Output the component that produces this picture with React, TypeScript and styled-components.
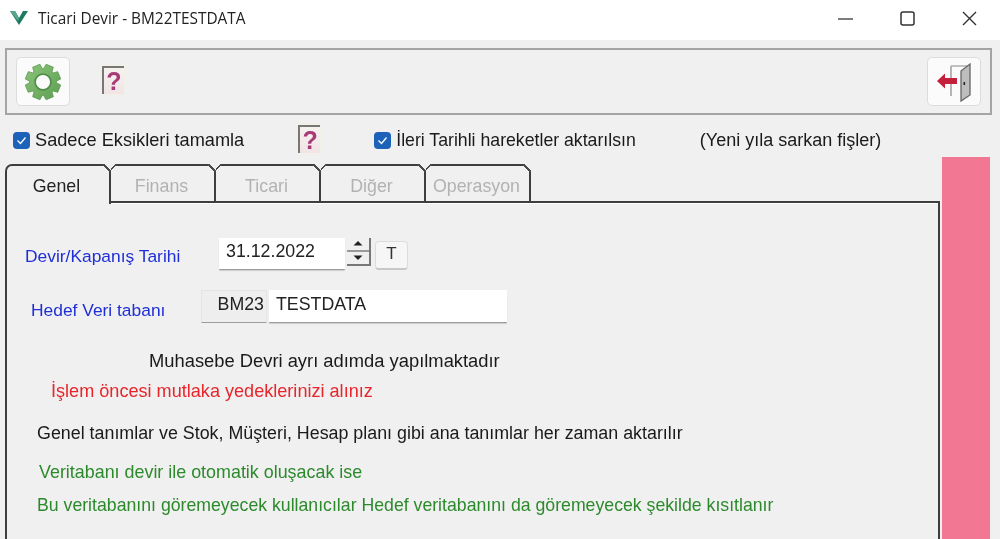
import React from "react";
import styled, { createGlobalStyle } from "styled-components";

const Global = createGlobalStyle`
  html, body { margin: 0; padding: 0; background: #f0f0f0; }
  body { font-family: "Liberation Sans", Arial, sans-serif; }
  * { box-sizing: border-box; }
`;
const Page = styled.div`
  width: 1000px; height: 539px; overflow: hidden; background: #f0f0f0; color: #1a1a1a;
  display: flex; flex-direction: column; filter: blur(0.4px);
`;
const TitleBar = styled.header`
  height: 40px; flex: none; background: #fff; display: flex; align-items: center; padding: 0 0 4px 9px;
`;
const TitleText = styled.span`
  font-family: "Open Sans", sans-serif; font-size: 15.4px; margin-left: 9px; color: #222; flex: 1; white-space: nowrap;
`;
const WinButtons = styled.div`
  display: flex; align-items: center; gap: 47px; padding-right: 23px; color: #333;
`;
const Toolbar = styled.div`
  margin: 8px 8px 0 5px; height: 67px; flex: none; border: 2px solid #a4a4a4; display: flex;
  align-items: center; padding: 0 9px 0 9px;
`;
const ToolButton = styled.button`
  width: 54px; height: 49px; padding: 0; background: #fbfbfb; border: 1px solid #dcdcdc; border-radius: 5px;
  display: flex; align-items: center; justify-content: center;
`;
const Help = styled.span<{ $ml: number; $mt: number }>`
  width: 22px; height: 28px; margin: ${p => p.$mt}px 0 0 ${p => p.$ml}px; flex: none;
  background: linear-gradient(#f5f2ee, #f1e4e6);
  border-top: 2px solid #777; border-left: 2px solid #777; box-shadow: 0 0 3px #f6eeda;
  display: flex; align-items: center; justify-content: center; padding-top: 1px;
  color: #a83a78; font-weight: 700; font-size: 25px; line-height: 1;
`;
const Spacer = styled.div` flex: 1; `;
const OptionRow = styled.div`
  height: 28px; margin-top: 11px; flex: none; display: flex; align-items: center; padding-left: 13px;
`;
const Check = styled.span<{ $ml?: number }>`
  width: 17px; height: 17px; flex: none; border-radius: 4px; background: #1b62b8; margin-left: ${p => p.$ml ?? 0}px;
  display: flex; align-items: center; justify-content: center;
`;
const OptionLabel = styled.span<{ $ml: number; $size: number }>`
  margin-left: ${p => p.$ml}px; font-size: ${p => p.$size}px; white-space: nowrap;
`;
const Main = styled.div`
  flex: 1; min-height: 0; display: flex; margin-top: 4px; padding-left: 5px;
`;
const TabColumn = styled.div`
  width: 935px; flex: none; display: flex; flex-direction: column; padding-top: 6px;
`;
const PinkBar = styled.aside`
  width: 48px; margin: -1px 0 0 2px; background: #f27792; flex: none;
`;
const TabRow = styled.div` display: flex; height: 39px; flex: none; position: relative; z-index: 1; `;
const Tab = styled.div<{ $active?: boolean }>`
  position: relative; width: ${p => (p.$active ? 106 : 105)}px; display: flex; align-items: center; justify-content: center;
  padding: ${p => (p.$active ? "3px 3px 0 0" : "6px 2px 0 0")}; font-size: 17.8px;
  color: ${p => (p.$active ? "#222" : "#b2b2b2")};
  border-top: 2px solid #3e3e3e; border-right: 2px solid #3e3e3e;
  border-left: ${p => (p.$active ? "2px solid #3e3e3e" : "0")};
  border-bottom: ${p => (p.$active ? "0" : "2px solid #3e3e3e")};
  border-top-left-radius: ${p => (p.$active ? 7 : 0)}px;
  height: ${p => (p.$active ? 40 : 39)}px;
  background: #f0f0f0;
  &::after {
    content: ""; position: absolute; top: -2px; right: -2px; width: 8px; height: 8px;
    background: linear-gradient(45deg, transparent 42%, #4a4a4a 42%, #4a4a4a 62%, #f0f0f0 62%);
  }
  &::before {
    content: ${p => (p.$active ? "none" : '""')}; position: absolute; top: -2px; left: 0; width: 6px; height: 6px;
    background: linear-gradient(-45deg, transparent 42%, #4a4a4a 42%, #4a4a4a 62%, #f0f0f0 62%);
  }
`;
const Panel = styled.section`
  flex: 1; margin-top: -2px; background: #f0f0f0; border: 2px solid #3e3e3e; border-bottom: 0; padding-top: 35px;
  box-shadow: inset 0 1px 0 #fff;
`;
const FieldRow = styled.div<{ $h: number; $mt?: number }>`
  display: flex; align-items: center; height: ${p => p.$h}px; margin-top: ${p => p.$mt ?? 0}px; font-size: 17.8px;
`;
const FieldLabel = styled.span<{ $ml: number; $w: number; $pt: number }>`
  color: #1f2fd6; margin-left: ${p => p.$ml}px; width: ${p => p.$w}px; flex: none; white-space: nowrap;
  font-size: 17.4px; padding-top: ${p => p.$pt}px;
`;
const Input = styled.div<{ $w: number }>`
  width: ${p => p.$w}px; height: 100%; background: #fff; border-bottom: 1px solid #9c9c9c;
  box-shadow: 0 1px 1px #ccc; padding: 0 0 4px 7px; display: flex; align-items: center; color: #222; border-radius: 1px;
`;
const Prefix = styled.div`
  width: 66px; height: 100%; background: #eeeeee; border: 1px solid #e4e4e4; border-bottom: 1px solid #9c9c9c;
  margin-right: 2px; display: flex; align-items: center; justify-content: flex-end; padding: 0 2px 5px 0; color: #222;
`;
const Spinner = styled.div`
  width: 24px; height: 28px; margin: -5px 0 0 2px; display: flex; flex-direction: column;
  border-right: 2px solid #777; position: relative; flex: none;
`;
const SpinPart = styled.div<{ $bottom?: boolean }>`
  flex: 1; display: flex; align-items: center; justify-content: center;
  background: #f0f0f0; border-bottom: ${p => (p.$bottom ? "2px solid #777" : "2px solid #999")};
`;
const TButton = styled.button`
  width: 33px; height: 29px; margin: 3px 0 0 4px; background: #f6f6f6; border: 1px solid #dcdcdc; border-bottom: 2px solid #c8c8c8; border-radius: 4px;
  font: 400 17px "Liberation Sans", sans-serif; color: #333; padding: 0 0 2px; flex: none;
`;
const Line = styled.div<{ $ml: number; $mt: number; $color: string; $size: number }>`
  margin-left: ${p => p.$ml}px; margin-top: ${p => p.$mt}px; color: ${p => p.$color};
  font-size: ${p => p.$size}px; line-height: 20px; white-space: nowrap;
`;

const Logo = () => (
  <svg width="20" height="16" viewBox="0 0 20 16">
    <path d="M1 1h5l4 7 4-7h5l-9 14z" fill="#1c7a63" />
    <path d="M1 1h5l4 7-1 3z" fill="#5aa58f" />
  </svg>
);

const gearPath = (() => {
  const n = 8, c = 20, ro = 18, ri = 13.5;
  let d = "";
  for (let i = 0; i < n; i++) {
    const a = (i * 2 * Math.PI) / n + Math.PI / 8;
    const pts: [number, number][] = [[ri, a - 0.34], [ro, a - 0.22], [ro, a + 0.22], [ri, a + 0.34]];
    pts.forEach(([r, t], k) => {
      d += `${i === 0 && k === 0 ? "M" : "L"}${(c + r * Math.cos(t)).toFixed(2)} ${(c + r * Math.sin(t)).toFixed(2)}`;
    });
  }
  return d + "Z M20 12.5a7.5 7.5 0 1 0 0 15a7.5 7.5 0 0 0 0-15Z";
})();
const Gear = () => (
  <svg width="40" height="40" viewBox="0 0 40 40">
    <defs>
      <linearGradient id="gearFill" x1="0" y1="0" x2="1" y2="1">
        <stop offset="0" stopColor="#8cc47a" />
        <stop offset="1" stopColor="#5d9f52" />
      </linearGradient>
    </defs>
    <path fillRule="evenodd" d={gearPath} fill="url(#gearFill)" stroke="#5b9750" strokeWidth="0.8" strokeLinejoin="round" />
    <circle cx="20" cy="20" r="8" fill="none" stroke="#4f8c47" strokeWidth="1.4" />
  </svg>
);
const Door = () => (
  <svg width="40" height="42" viewBox="0 0 40 42">
    <path d="M17 5h17" stroke="#9a9a9a" strokeWidth="1.2" />
    <path d="M17 5v30" stroke="#b5b5b5" strokeWidth="2" />
    <path d="M27 10l9-7v31l-9 6z" fill="#bdbdbd" stroke="#666" strokeWidth="1.3" />
    <rect x="29.5" y="21" width="1.6" height="3" fill="#222" />
    <path d="M3 20l8-7.5v4.5h12v6H11v4.5z" fill="#c4203c" />
  </svg>
);
const Arrow = ({ up }: { up?: boolean }) => (
  <svg width="12" height="7" viewBox="0 0 12 7">
    <path d={up ? "M6 1l4.5 4.5h-9z" : "M1.5 1.5h9L6 6z"} fill="#222" />
  </svg>
);
const Tick = () => (
  <svg width="11" height="9" viewBox="0 0 11 9"><path d="M1.5 4.5l3 3 5-6" fill="none" stroke="#fff" strokeWidth="1.3" /></svg>
);

export default function App() {
  return (
    <Page>
      <Global />
      <TitleBar>
        <Logo />
        <TitleText>Ticari Devir - BM22TESTDATA</TitleText>
        <WinButtons>
          <svg width="15" height="15" viewBox="0 0 15 15"><path d="M0 8h15" stroke="#444" strokeWidth="1.4" /></svg>
          <svg width="15" height="15" viewBox="0 0 15 15"><rect x="1" y="1" width="13" height="13" rx="2" fill="none" stroke="#333" strokeWidth="1.5" /></svg>
          <svg width="15" height="15" viewBox="0 0 15 15"><path d="M1 1l13 13M14 1L1 14" stroke="#333" strokeWidth="1.4" /></svg>
        </WinButtons>
      </TitleBar>
      <Toolbar>
        <ToolButton aria-label="Ayarlar"><Gear /></ToolButton>
        <Help $ml={32} $mt={-4}>?</Help>
        <Spacer />
        <ToolButton aria-label="Çıkış"><Door /></ToolButton>
      </Toolbar>
      <OptionRow>
        <Check><Tick /></Check>
        <OptionLabel $ml={5} $size={18.2}>Sadece Eksikleri tamamla</OptionLabel>
        <Help $ml={54} $mt={-2}>?</Help>
        <Check $ml={54}><Tick /></Check>
        <OptionLabel $ml={5} $size={17.7}>İleri Tarihli hareketler aktarılsın</OptionLabel>
        <OptionLabel $ml={64} $size={18}>(Yeni yıla sarkan fişler)</OptionLabel>
      </OptionRow>
      <Main>
        <TabColumn>
          <TabRow>
            <Tab $active>Genel</Tab>
            <Tab>Finans</Tab>
            <Tab>Ticari</Tab>
            <Tab>Diğer</Tab>
            <Tab>Operasyon</Tab>
          </TabRow>
          <Panel>
            <FieldRow $h={32}>
              <FieldLabel $ml={18} $w={194} $pt={5}>Devir/Kapanış Tarihi</FieldLabel>
              <Input $w={126}>31.12.2022</Input>
              <Spinner>
                <SpinPart><Arrow up /></SpinPart>
                <SpinPart $bottom><Arrow /></SpinPart>
              </Spinner>
              <TButton>T</TButton>
            </FieldRow>
            <FieldRow $h={33} $mt={20}>
              <FieldLabel $ml={24} $w={170} $pt={7}>Hedef Veri tabanı</FieldLabel>
              <Prefix>BM23</Prefix>
              <Input $w={238}>TESTDATA</Input>
            </FieldRow>
            <Line $ml={142} $mt={28} $color="#1a1a1a" $size={18.35}>Muhasebe Devri ayrı adımda yapılmaktadır</Line>
            <Line $ml={44} $mt={10} $color="#e8252b" $size={18.1}>İşlem öncesi mutlaka yedeklerinizi alınız</Line>
            <Line $ml={30} $mt={22} $color="#1a1a1a" $size={17.85}>Genel tanımlar ve Stok, Müşteri, Hesap planı gibi ana tanımlar her zaman aktarılır</Line>
            <Line $ml={32} $mt={19} $color="#2c8a2c" $size={17.9}>Veritabanı devir ile otomatik oluşacak ise</Line>
            <Line $ml={30} $mt={13} $color="#2c8a2c" $size={17.7}>Bu veritabanını göremeyecek kullanıcılar Hedef veritabanını da göremeyecek şekilde kısıtlanır</Line>
          </Panel>
        </TabColumn>
        <PinkBar />
      </Main>
    </Page>
  );
}
